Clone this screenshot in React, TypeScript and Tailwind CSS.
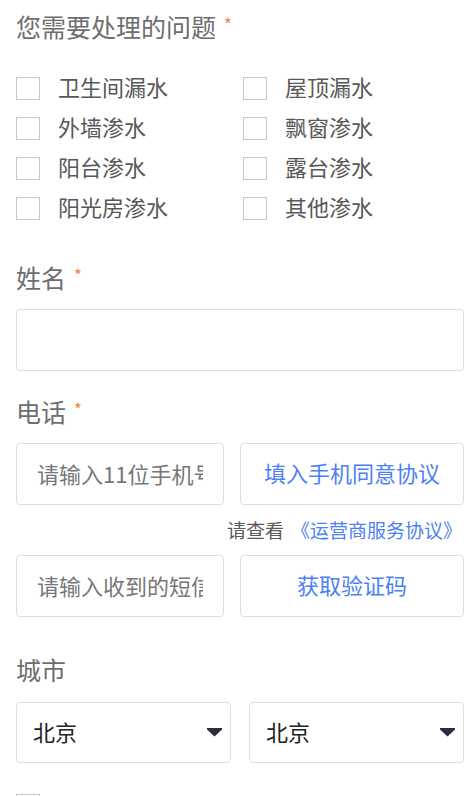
import React from "react";

const FONT = { fontFamily: '"Noto Sans CJK SC", "Noto Sans", sans-serif' };

const issues = [
  ["卫生间漏水", "屋顶漏水"],
  ["外墙渗水", "飘窗渗水"],
  ["阳台渗水", "露台渗水"],
  ["阳光房渗水", "其他渗水"],
];

function Check({ label }: { label: string }) {
  return (
    <div className="flex h-10 items-center">
      <span className="box-border h-[23px] w-6 shrink-0 border border-[#c8c8c8] bg-white" />
      <span className="-mt-1 ml-[18px] text-[22px] leading-none text-[#585858]">{label}</span>
    </div>
  );
}

function Label({ text, required }: { text: string; required?: boolean }) {
  return (
    <div className="flex h-9 items-center pb-[4px] text-[25px] leading-none text-[#6e6e6e]">
      <span>{text}</span>
      {required && (
        <span className="ml-[8px] -mt-[6px] text-[17px] leading-none text-[#f0864a]">*</span>
      )}
    </div>
  );
}

function Caret() {
  return (
    <svg width="15" height="9" viewBox="0 0 15 9" className="shrink-0">
      <path d="M0 0 H15 V1.5 L7.5 8.5 L0 1.5 Z" fill="#2c2c40" />
    </svg>
  );
}

function Select({ value }: { value: string }) {
  return (
    <div className="box-border flex h-[61px] flex-1 items-center justify-between rounded-[4px] border border-[#dedede] pl-[16px] pr-[8px]">
      <span className="-mt-1 text-[22px] leading-none text-[#222]">{value}</span>
      <Caret />
    </div>
  );
}

export default function App() {
  return (
    <div style={FONT} className="min-h-[796px] w-[476px] overflow-hidden bg-white pl-4 pr-3 pt-[10px]">
      <Label text="您需要处理的问题" required />

      <div className="mt-[22px] grid grid-cols-[227px_1fr]">
        {issues.map(([a, b]) => (
          <React.Fragment key={a}>
            <Check label={a} />
            <Check label={b} />
          </React.Fragment>
        ))}
      </div>

      <div className="mt-[33px]">
        <Label text="姓名" required />
      </div>
      <input
        style={FONT}
        className="mt-3 box-border block h-[62px] w-full rounded-[4px] border border-[#dedede] px-5 text-[22px] outline-none"
      />

      <div className="mt-6">
        <Label text="电话" required />
      </div>
      <div className="mt-3 flex h-[62px] gap-4">
        <input
          style={FONT}
          placeholder="请输入11位手机号"
          className="box-border h-full w-[208px] shrink-0 rounded-[4px] border border-[#dedede] px-5 pb-[3px] text-[22px] text-[#333] outline-none placeholder:text-[#777]"
        />
        <button
          style={FONT}
          className="box-border flex h-full flex-1 items-center justify-center rounded-[4px] border border-[#dedede] bg-white pb-1 text-[22px] leading-none text-[#4d7ff5]"
        >
          填入手机同意协议
        </button>
      </div>

      <div className="mt-[13px] flex h-[26px] items-center justify-end pb-1 pr-[2px] text-[19px] leading-none">
        <span className="text-[#585858]">请查看</span>
        <span className="ml-[7px] text-[#4d7ff5]">《运营商服务协议》</span>
      </div>

      <div className="mt-[11px] flex h-[62px] gap-4">
        <input
          style={FONT}
          placeholder="请输入收到的短信验证码"
          className="box-border h-full w-[208px] shrink-0 rounded-[4px] border border-[#dedede] px-5 pb-[3px] text-[22px] text-[#333] outline-none placeholder:text-[#777]"
        />
        <button
          style={FONT}
          className="box-border flex h-full flex-1 items-center justify-center rounded-[4px] border border-[#dedede] bg-white pb-1 text-[22px] leading-none text-[#4d7ff5]"
        >
          获取验证码
        </button>
      </div>

      <div className="mt-9">
        <Label text="城市" />
      </div>
      <div className="mt-[13px] flex gap-[18px]">
        <Select value="北京" />
        <Select value="北京" />
      </div>

      <div className="mt-[31px] flex items-center">
        <span className="box-border h-[23px] w-6 shrink-0 border border-[#c8c8c8] bg-white" />
      </div>
    </div>
  );
}
